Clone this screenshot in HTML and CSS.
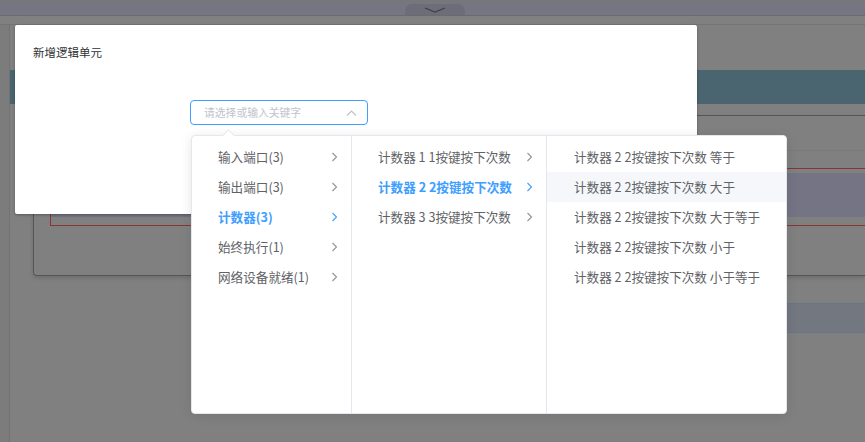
FILE: index.html
```html
<!DOCTYPE html>
<html lang="zh-CN">
<head>
  <meta charset="UTF-8" />
  <title>新增逻辑单元</title>
  <link rel="stylesheet" href="styles.css">
</head>
<body>

  <!-- 背景页面（已被遮罩变暗） -->
  <div class="page">
    <div class="topbar">
      <div class="toggle">
        <svg width="22" height="6" viewBox="0 0 22 6"><path d="M1 1l10 4 10-4" fill="none" stroke="#3f3f48" stroke-width="1.2"/></svg>
      </div>
    </div>
    <div class="subbar"></div>
    <div class="layout">
      <div class="side"></div>
      <div class="main">
        <div class="banner"></div>
        <div class="panel">
          <div class="panel-head"></div>
          <div class="panel-sel">
            <div class="sel-band"></div>
          </div>
        </div>
        <div class="info-band"></div>
      </div>
    </div>
  </div>

  <!-- 弹窗 -->
  <div class="dialog">
    <div class="dialog-title">新增逻辑单元</div>
    <div class="dialog-body">
      <div class="cascader">
        <div class="cascader-input">
          <span class="placeholder">请选择或输入关键字</span>
          <svg class="caret" width="11" height="6" viewBox="0 0 11 6"><path d="M1 5.5l4.5-4.5 4.5 4.5" fill="none" stroke="#c0c4cc" stroke-width="1.2"/></svg>
        </div>

        <div class="cascader-dropdown">
          <span class="popper-arrow"></span>

          <ul class="menu menu-1">
            <li class="node"><span class="label">输入端口(3)</span><svg class="arrow" width="7" height="10" viewBox="0 0 7 10"><path d="M1.5 1l4 4-4 4" fill="none" stroke="currentColor" stroke-width="1.1"/></svg></li>
            <li class="node"><span class="label">输出端口(3)</span><svg class="arrow" width="7" height="10" viewBox="0 0 7 10"><path d="M1.5 1l4 4-4 4" fill="none" stroke="currentColor" stroke-width="1.1"/></svg></li>
            <li class="node active"><span class="label">计数器(3)</span><svg class="arrow" width="7" height="10" viewBox="0 0 7 10"><path d="M1.5 1l4 4-4 4" fill="none" stroke="currentColor" stroke-width="1.1"/></svg></li>
            <li class="node"><span class="label">始终执行(1)</span><svg class="arrow" width="7" height="10" viewBox="0 0 7 10"><path d="M1.5 1l4 4-4 4" fill="none" stroke="currentColor" stroke-width="1.1"/></svg></li>
            <li class="node"><span class="label">网络设备就绪(1)</span><svg class="arrow" width="7" height="10" viewBox="0 0 7 10"><path d="M1.5 1l4 4-4 4" fill="none" stroke="currentColor" stroke-width="1.1"/></svg></li>
          </ul>

          <ul class="menu menu-2">
            <li class="node"><span class="label">计数器 1 1按键按下次数</span><svg class="arrow" width="7" height="10" viewBox="0 0 7 10"><path d="M1.5 1l4 4-4 4" fill="none" stroke="currentColor" stroke-width="1.1"/></svg></li>
            <li class="node active"><span class="label">计数器 2 2按键按下次数</span><svg class="arrow" width="7" height="10" viewBox="0 0 7 10"><path d="M1.5 1l4 4-4 4" fill="none" stroke="currentColor" stroke-width="1.1"/></svg></li>
            <li class="node"><span class="label">计数器 3 3按键按下次数</span><svg class="arrow" width="7" height="10" viewBox="0 0 7 10"><path d="M1.5 1l4 4-4 4" fill="none" stroke="currentColor" stroke-width="1.1"/></svg></li>
          </ul>

          <ul class="menu menu-3">
            <li class="node"><span class="label">计数器 2 2按键按下次数 等于</span></li>
            <li class="node hover"><span class="label">计数器 2 2按键按下次数 大于</span></li>
            <li class="node"><span class="label">计数器 2 2按键按下次数 大于等于</span></li>
            <li class="node"><span class="label">计数器 2 2按键按下次数 小于</span></li>
            <li class="node"><span class="label">计数器 2 2按键按下次数 小于等于</span></li>
          </ul>
        </div>
      </div>
    </div>
  </div>

</body>
</html>
```

FILE: styles.css
```css
body {
  margin: 0;
  height: 442px;
  overflow: hidden;
  background: #808080;
  font-family: "Noto Sans CJK SC", "Liberation Sans", sans-serif;
}

/* 背景页面 */
.page {
  height: 442px;
  display: flex;
  flex-direction: column;
  background: #808080;
}

.topbar {
  height: 13px;
  border-top: 2px solid #777777;
  border-bottom: 1px solid #6b6b6b;
  background: #767683;
  display: flex;
  justify-content: center;
  align-items: flex-end;
}

.toggle {
  width: 60px;
  height: 11px;
  margin-left: 5px;
  background: #6d6d79;
  border-radius: 7px 7px 0 0;
  display: flex;
  justify-content: center;
  align-items: center;
}

.subbar {
  height: 8px;
  border-bottom: 1px solid #747474;
}

.layout {
  flex: 1;
  display: flex;
}

.side {
  width: 9px;
  background: #7c7c7c;
  border-right: 1px solid #727272;
}

.main {
  flex: 1;
  padding-top: 45px;
}

.banner {
  height: 34px;
  background: #4a6570;
}

.panel {
  margin: 11px 0 0 23px;
  height: 159px;
  border: 1px solid #555555;
  border-right: none;
  border-radius: 4px 0 0 4px;
  box-shadow: 0 2px 4px rgba(0,0,0,0.15);
}

.panel-head {
  height: 34px;
  border-bottom: 1px solid #7a7a7a;
}

.panel-sel {
  margin: 17px 0 0 16px;
  height: 52px;
  border: 1px solid #8a3434;
  border-right: none;
  padding-top: 4px;
}

.sel-band {
  height: 44px;
  background: #747484;
}

.info-band {
  margin: 27px 0 0 500px;
  height: 28px;
  background: #737880;
  border-top: 1px solid #6a7488;
  border-bottom: 1px solid #6a7488;
}

/* 弹窗 */
.dialog {
  position: absolute;
  left: 15px;
  top: 25px;
  width: 682px;
  height: 189px;
  background: #fff;
  border-radius: 2px;
  box-shadow: 0 1px 3px rgba(0,0,0,0.3);
}

.dialog-title {
  padding: 17px 18px 0;
  font-size: 11.5px;
  line-height: 20px;
  color: #303133;
}

.dialog-body {
  padding-left: 175px;
  margin-top: 38px;
}

.cascader {
  position: relative;
  width: 178px;
}

.cascader-input {
  box-sizing: border-box;
  height: 25px;
  border: 1px solid #409eff;
  border-radius: 4px;
  padding: 0 10px 0 13px;
  display: flex;
  align-items: center;
}

.placeholder {
  flex: 1;
  font-size: 10.8px;
  line-height: 23px;
  color: #c0c4cc;
}

/* 级联下拉 */
.cascader-dropdown {
  position: absolute;
  top: 35px;
  left: 1px;
  z-index: 10;
  box-sizing: border-box;
  width: 596px;
  height: 279px;
  display: flex;
  background: #fff;
  border: 1px solid #e4e7ed;
  border-radius: 4px;
  box-shadow: 0 2px 12px 0 rgba(0,0,0,0.1);
}

.popper-arrow {
  position: absolute;
  top: -5px;
  left: 32px;
  width: 8px;
  height: 8px;
  background: #fff;
  border-top: 1px solid #e4e7ed;
  border-left: 1px solid #e4e7ed;
  transform: rotate(45deg);
}

.menu {
  list-style: none;
  margin: 0;
  padding: 6px 0;
  box-sizing: border-box;
  border-right: 1px solid #e4e7ed;
}

.menu-1 {
  width: 160px;
}

.menu-2 {
  width: 195px;
}

.menu-3 {
  flex: 1;
  border-right: none;
}

.node {
  height: 30px;
  padding: 0 13px 0 26px;
  display: flex;
  align-items: center;
  font-size: 12.6px;
  color: #606266;
}

.menu-3 .node {
  padding-left: 27px;
}

.node .label {
  flex: 1;
  white-space: nowrap;
  line-height: 30px;
}

.node .arrow {
  color: #909399;
}

.node.active {
  color: #409eff;
  font-weight: bold;
}

.node.active .arrow {
  color: #409eff;
}

.node.hover {
  background: #f5f7fa;
}
```
